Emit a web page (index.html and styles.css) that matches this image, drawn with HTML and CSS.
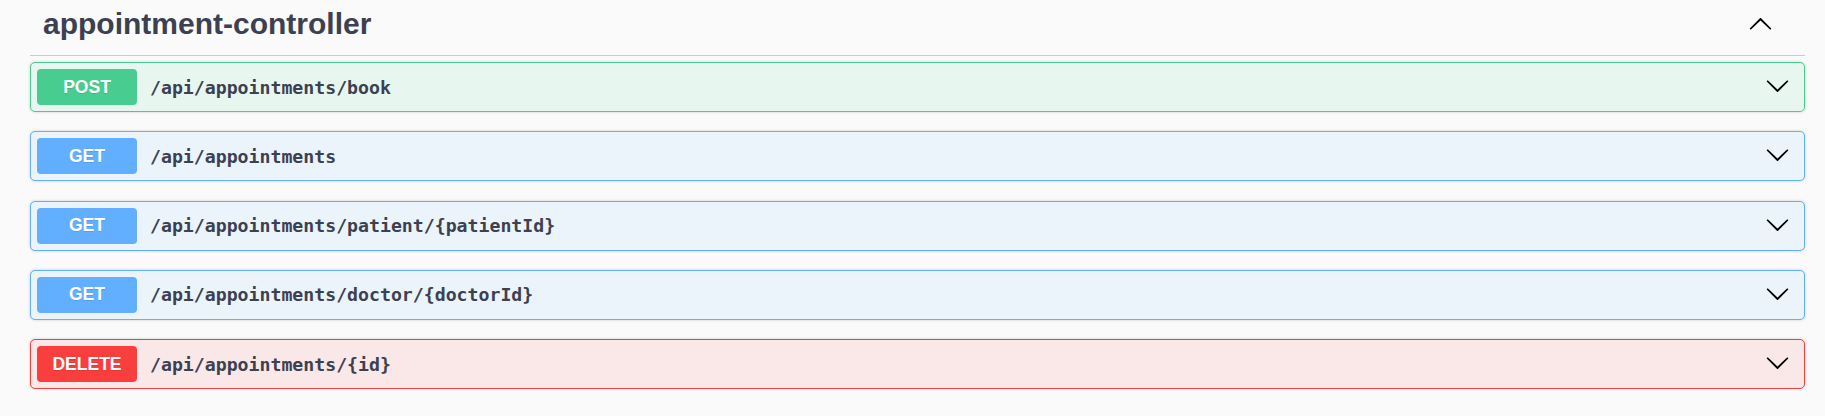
FILE: index.html
```html
<!DOCTYPE html>
<html lang="en">
<head>
<meta charset="utf-8">
<title>appointment-controller</title>
<link rel="stylesheet" href="styles.css">
</head>
<body>
<div class="wrapper">
  <section class="tag-section">
    <h3 class="tag">
      <span class="tag-name">appointment-controller</span>
      <button class="tag-toggle" aria-label="Collapse operation">
        <svg class="arrow up" viewBox="0 0 20 20" width="25" height="25"><path d="M17.418 6.109c.272-.268.709-.268.979 0s.271.701 0 .969l-7.908 7.83c-.27.268-.707.268-.979 0l-7.908-7.83c-.27-.268-.27-.701 0-.969.271-.268.709-.268.979 0L10 13.25l7.418-7.141z"/></svg>
      </button>
    </h3>
    <div class="ops">
      <div class="opblock post">
        <span class="method">POST</span>
        <span class="path">/api/appointments/book</span>
        <svg class="arrow" viewBox="0 0 20 20" width="25" height="25"><path d="M17.418 6.109c.272-.268.709-.268.979 0s.271.701 0 .969l-7.908 7.83c-.27.268-.707.268-.979 0l-7.908-7.83c-.27-.268-.27-.701 0-.969.271-.268.709-.268.979 0L10 13.25l7.418-7.141z"/></svg>
      </div>
      <div class="opblock get">
        <span class="method">GET</span>
        <span class="path">/api/appointments</span>
        <svg class="arrow" viewBox="0 0 20 20" width="25" height="25"><path d="M17.418 6.109c.272-.268.709-.268.979 0s.271.701 0 .969l-7.908 7.83c-.27.268-.707.268-.979 0l-7.908-7.83c-.27-.268-.27-.701 0-.969.271-.268.709-.268.979 0L10 13.25l7.418-7.141z"/></svg>
      </div>
      <div class="opblock get">
        <span class="method">GET</span>
        <span class="path">/api/appointments/patient/{patientId}</span>
        <svg class="arrow" viewBox="0 0 20 20" width="25" height="25"><path d="M17.418 6.109c.272-.268.709-.268.979 0s.271.701 0 .969l-7.908 7.83c-.27.268-.707.268-.979 0l-7.908-7.83c-.27-.268-.27-.701 0-.969.271-.268.709-.268.979 0L10 13.25l7.418-7.141z"/></svg>
      </div>
      <div class="opblock get">
        <span class="method">GET</span>
        <span class="path">/api/appointments/doctor/{doctorId}</span>
        <svg class="arrow" viewBox="0 0 20 20" width="25" height="25"><path d="M17.418 6.109c.272-.268.709-.268.979 0s.271.701 0 .969l-7.908 7.83c-.27.268-.707.268-.979 0l-7.908-7.83c-.27-.268-.27-.701 0-.969.271-.268.709-.268.979 0L10 13.25l7.418-7.141z"/></svg>
      </div>
      <div class="opblock delete">
        <span class="method">DELETE</span>
        <span class="path">/api/appointments/{id}</span>
        <svg class="arrow" viewBox="0 0 20 20" width="25" height="25"><path d="M17.418 6.109c.272-.268.709-.268.979 0s.271.701 0 .969l-7.908 7.83c-.27.268-.707.268-.979 0l-7.908-7.83c-.27-.268-.27-.701 0-.969.271-.268.709-.268.979 0L10 13.25l7.418-7.141z"/></svg>
      </div>
    </div>
  </section>
</div>
</body>
</html>
```

FILE: styles.css
```css
html, body {
  margin: 0;
  padding: 0;
  background: #fafafa;
}

body {
  font-family: "Liberation Sans", Arial, sans-serif;
  color: #3b4151;
}

.wrapper {
  padding: 0 20px 0 30px;
}

.tag {
  display: flex;
  align-items: center;
  margin: 0 0 6px;
  padding: 6px 0 13px 13px;
  border-bottom: 1px solid #c9cacd;
  font-size: 30px;
  font-weight: 700;
  line-height: 36px;
}

.tag-name {
  flex: 1;
}

.tag-toggle {
  display: flex;
  background: none;
  border: 0;
  padding: 0;
  margin: 0 32px 0 0;
  cursor: pointer;
}

.arrow {
  display: block;
  fill: #000;
}

.arrow.up {
  transform: rotate(180deg);
}

.ops {
  display: flex;
  flex-direction: column;
  gap: 19.3px;
}

.opblock {
  display: flex;
  align-items: center;
  height: 50px;
  box-sizing: border-box;
  padding: 0 14px 0 6px;
  border: 1px solid;
  border-radius: 5px;
  box-shadow: 0 0 3px rgba(0, 0, 0, 0.19);
}

.opblock .arrow {
  margin-bottom: 3px;
}

.method {
  display: flex;
  align-items: center;
  justify-content: center;
  width: 100px;
  height: 36px;
  border-radius: 4px;
  color: #fff;
  font-size: 17.5px;
  font-weight: 700;
  text-shadow: 0 1px 0 rgba(0, 0, 0, 0.1);
}

.path {
  flex: 1;
  padding: 0 13px;
  font-family: "DejaVu Sans Mono", "Liberation Mono", monospace;
  font-size: 18.2px;
  font-weight: 700;
  color: #3b4151;
}

.post {
  border-color: #49cc90;
  background: #e8f6f0;
}
.post .method { background: #49cc90; }

.get {
  border-color: #61affe;
  background: #ebf3fb;
}
.get .method { background: #61affe; }

.delete {
  border-color: #f93e3e;
  background: #fae7e7;
}
.delete .method { background: #f93e3e; }
```
